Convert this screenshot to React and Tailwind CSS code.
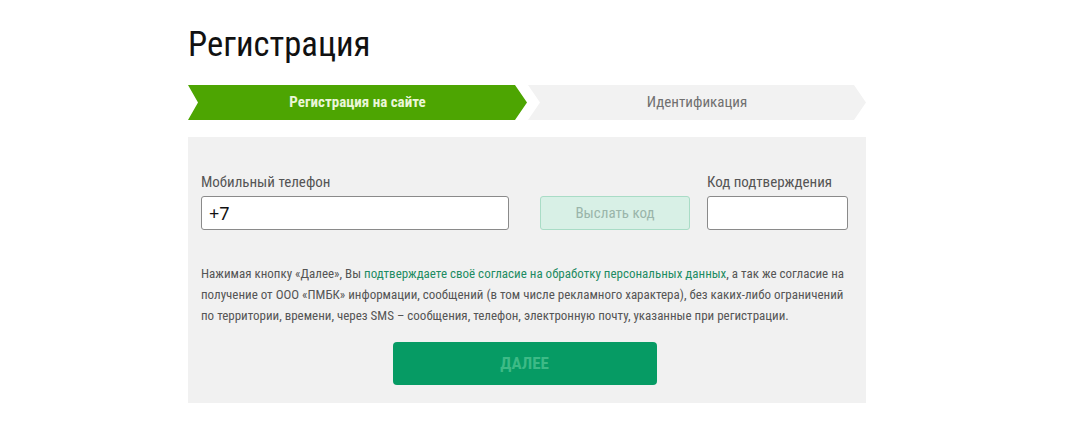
import React, { useState } from "react";

const font = { fontFamily: '"Roboto Condensed", "Liberation Sans Narrow", "DejaVu Sans Condensed", Roboto, sans-serif' };
const inputFont = { fontFamily: '"Noto Sans", "Open Sans", sans-serif' };

export default function App() {
  const [phone, setPhone] = useState("+7");
  const [code, setCode] = useState("");

  return (
    <div className="min-h-[424px] w-full bg-white" style={font}>
      <div className="ml-[188px] w-[678px] pt-[24px]">
        {/* Заголовок */}
        <h1 className="text-[34.6px] leading-[40px] text-[#111]">Регистрация</h1>

        {/* Шаги */}
        <div className="mt-[21px] flex h-[35px] gap-[1px]">
          <div className="flex w-[339px] items-center justify-center bg-[#4da502] text-[15px] font-bold text-[#eaf6d8] [clip-path:polygon(0_0,calc(100%_-_12px)_0,100%_50%,calc(100%_-_12px)_100%,0_100%,10px_50%)]">
            Регистрация на сайте
          </div>
          <div className="flex w-[338px] items-center justify-center bg-[#f2f2f2] text-[15px] font-normal text-[#707070] [clip-path:polygon(0_0,calc(100%_-_12px)_0,100%_50%,calc(100%_-_12px)_100%,0_100%,12px_50%)]">
            Идентификация
          </div>
        </div>

        {/* Форма */}
        <div className="mt-[17px] bg-[#f1f1f1] pb-[18px] pl-[13px] pr-[18px] pt-[36px]">
          <div className="flex items-end">
            <div className="w-[308px]">
              <label className="mb-[5px] block text-[15px] leading-[18px] text-[#555]">Мобильный телефон</label>
              <input
                type="text"
                value={phone}
                onChange={(e) => setPhone(e.target.value)}
                style={inputFont}
                className="h-[34px] w-full rounded-[3px] border border-[#8a8a8a] bg-white px-[7px] text-[18px] text-[#111] outline-none"
              />
            </div>
            <button
              type="button"
              disabled
              className="ml-[31px] h-[34px] w-[150px] rounded-[3px] border border-[#a9dcc6] bg-[#d8f0e6] text-[15px] text-[#9ab5aa]"
            >
              Выслать код
            </button>
            <div className="ml-[17px] w-[141px]">
              <label className="mb-[5px] block text-[15px] leading-[18px] text-[#555]">Код подтверждения</label>
              <input
                type="text"
                value={code}
                onChange={(e) => setCode(e.target.value)}
                style={inputFont}
                className="h-[34px] w-full rounded-[3px] border border-[#8a8a8a] bg-white px-[7px] text-[16px] outline-none"
              />
            </div>
          </div>

          <p className="mt-[33px] whitespace-nowrap text-[13px] leading-[21px] text-[#555]">
            Нажимая кнопку «Далее», Вы{" "}
            <a href="#" className="text-[#1e8c63]">подтверждаете своё согласие на обработку персональных данных</a>, а так же согласие на
            <br />
            получение от ООО «ПМБК» информации, сообщений (в том числе рекламного характера), без каких-либо ограничений
            <br />
            по территории, времени, через SMS – сообщения, телефон, электронную почту, указанные при регистрации.
          </p>

          <div className="mt-[16px] flex justify-center">
            <button
              type="button"
              disabled
              className="h-[43px] w-[264px] rounded-[4px] bg-[#069b64] text-[17px] font-bold text-[#3dba86]"
            >
              ДАЛЕЕ
            </button>
          </div>
        </div>
      </div>
    </div>
  );
}
